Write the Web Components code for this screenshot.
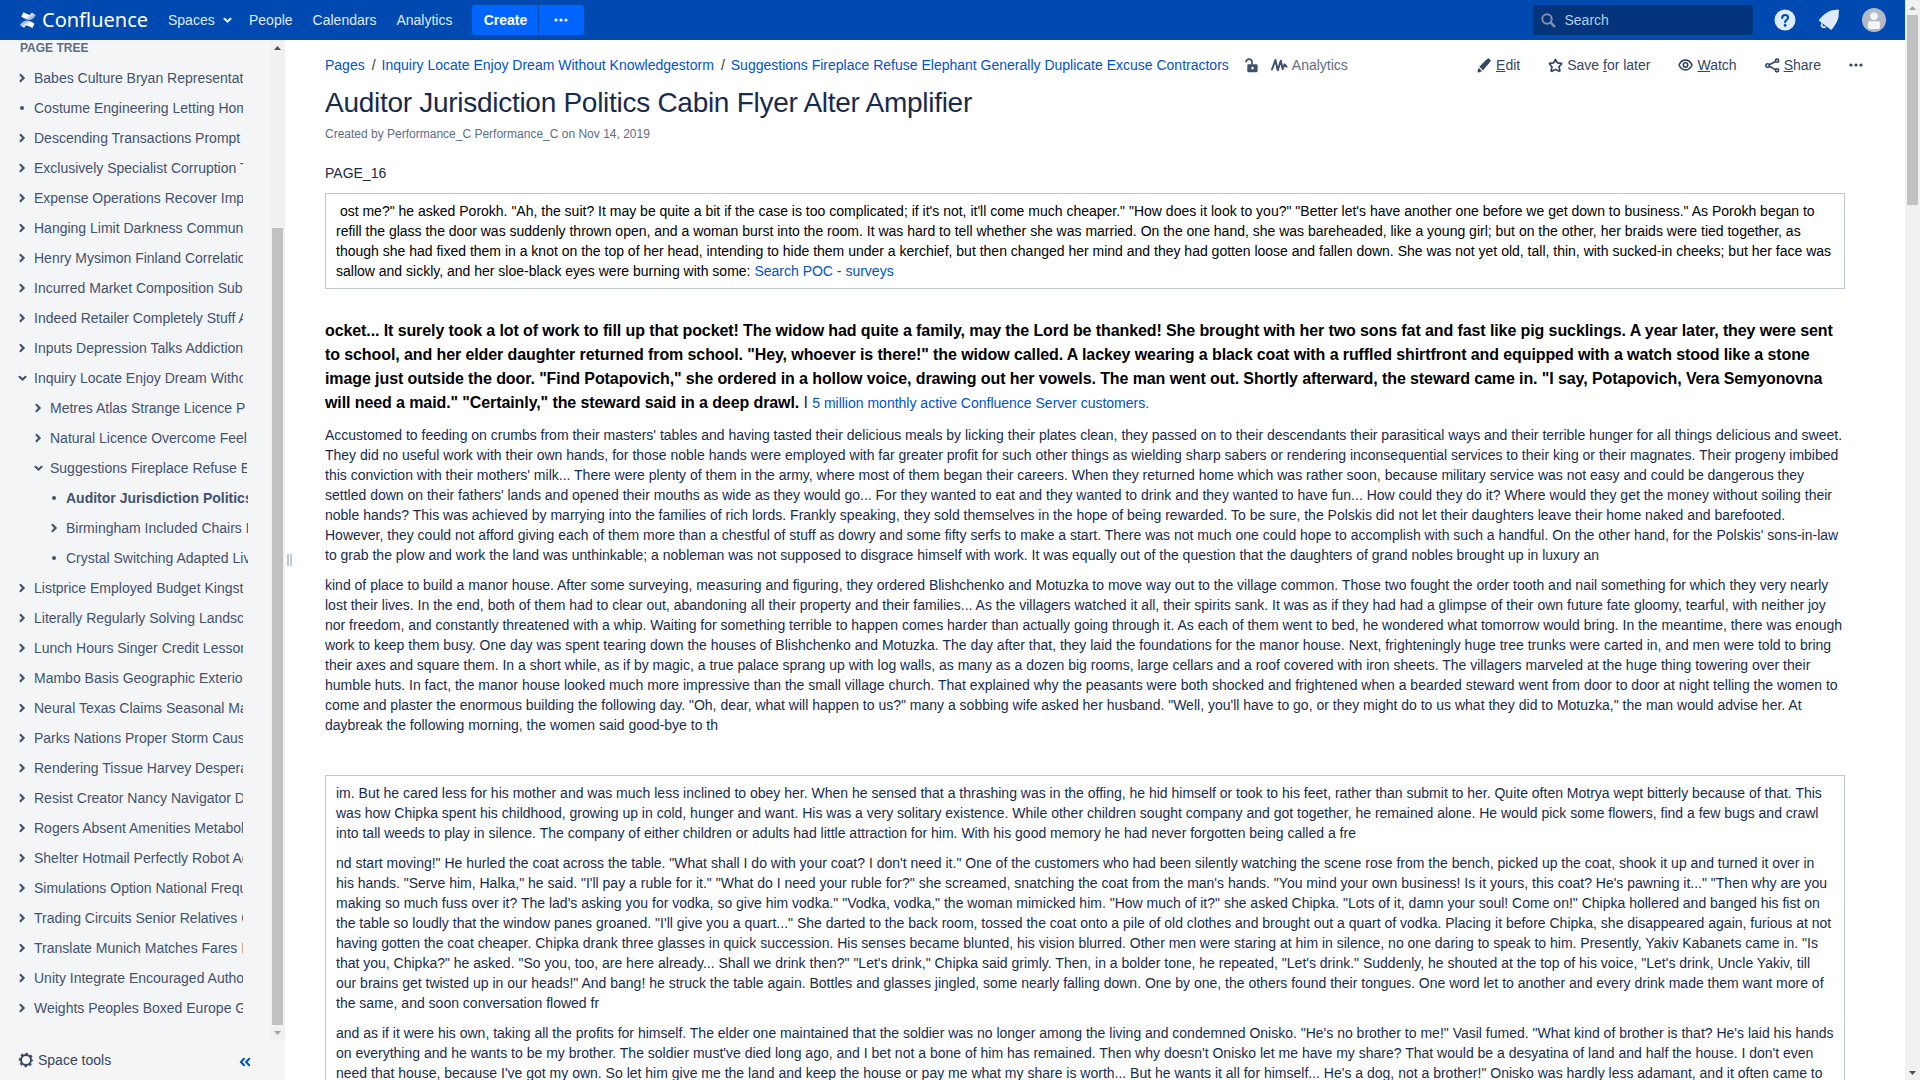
<!DOCTYPE html>
<html lang="en">
<head>
<meta charset="utf-8">
<title>Auditor Jurisdiction Politics Cabin Flyer Alter Amplifier - Confluence</title>
<style>
html,body{margin:0;height:100%;overflow:hidden;background:#fff}
body{font:14px/20px "Liberation Sans",Arial,sans-serif;color:#172b4d}
</style>
</head>
<body>
<wiki-app>
  <wiki-header slot="header"></wiki-header>
  <wiki-sidebar slot="side">
    <tree-item>Babes Culture Bryan Representat</tree-item>
    <tree-item kind="leaf">Costume Engineering Letting Hom</tree-item>
    <tree-item>Descending Transactions Prompt</tree-item>
    <tree-item>Exclusively Specialist Corruption T</tree-item>
    <tree-item>Expense Operations Recover Imp</tree-item>
    <tree-item>Hanging Limit Darkness Commun</tree-item>
    <tree-item>Henry Mysimon Finland Correlatio</tree-item>
    <tree-item>Incurred Market Composition Sub</tree-item>
    <tree-item>Indeed Retailer Completely Stuff A</tree-item>
    <tree-item>Inputs Depression Talks Addiction</tree-item>
    <tree-item kind="open">Inquiry Locate Enjoy Dream Witho</tree-item>
    <tree-item level="1">Metres Atlas Strange Licence P</tree-item>
    <tree-item level="1">Natural Licence Overcome Feel</tree-item>
    <tree-item level="1" kind="open">Suggestions Fireplace Refuse E</tree-item>
    <tree-item level="2" kind="leaf" current>Auditor Jurisdiction Politics</tree-item>
    <tree-item level="2">Birmingham Included Chairs L</tree-item>
    <tree-item level="2" kind="leaf">Crystal Switching Adapted Liv</tree-item>
    <tree-item>Listprice Employed Budget Kingst</tree-item>
    <tree-item>Literally Regularly Solving Landsc</tree-item>
    <tree-item>Lunch Hours Singer Credit Lesson</tree-item>
    <tree-item>Mambo Basis Geographic Exterio</tree-item>
    <tree-item>Neural Texas Claims Seasonal Ma</tree-item>
    <tree-item>Parks Nations Proper Storm Caus</tree-item>
    <tree-item>Rendering Tissue Harvey Despera</tree-item>
    <tree-item>Resist Creator Nancy Navigator D</tree-item>
    <tree-item>Rogers Absent Amenities Metabol</tree-item>
    <tree-item>Shelter Hotmail Perfectly Robot Ag</tree-item>
    <tree-item>Simulations Option National Frequ</tree-item>
    <tree-item>Trading Circuits Senior Relatives C</tree-item>
    <tree-item>Translate Munich Matches Fares I</tree-item>
    <tree-item>Unity Integrate Encouraged Autho</tree-item>
    <tree-item>Weights Peoples Boxed Europe G</tree-item>
  </wiki-sidebar>
  <page-toolbar slot="main"></page-toolbar>
  <page-heading slot="main">Auditor Jurisdiction Politics Cabin Flyer Alter Amplifier</page-heading>
  <text-block slot="main">PAGE_16</text-block>
  <text-panel slot="main" dark><text-block>&nbsp;ost me?" he asked Porokh. "Ah, the suit? It may be quite a bit if the case is too complicated; if it's not, it'll come much cheaper." "How does it look to you?" "Better let's have another one before we get down to business." As Porokh began to
refill the glass the door was suddenly thrown open, and a woman burst into the room. It was hard to tell whether she was married. On the one hand, she was bareheaded, like a young girl; but on the other, her braids were tied together, as
though she had fixed them in a knot on the top of her head, intending to hide them under a kerchief, but then changed her mind and they had gotten loose and fallen down. She was not yet old, tall, thin, with sucked-in cheeks; but her face was
<span>sallow and sickly, and her sloe-black eyes were burning with some: </span><wiki-link>Search POC - surveys</wiki-link></text-block></text-panel>
  <lead-block slot="main">ocket... It surely took a lot of work to fill up that pocket! The widow had quite a family, may the Lord be thanked! She brought with her two sons fat and fast like pig sucklings. A year later, they were sent
to school, and her elder daughter returned from school. "Hey, whoever is there!" the widow called. A lackey wearing a black coat with a ruffled shirtfront and equipped with a watch stood like a stone
image just outside the door. "Find Potapovich," she ordered in a hollow voice, drawing out her vowels. The man went out. Shortly afterward, the steward came in. "I say, Potapovich, Vera Semyonovna
<span>will need a maid." "Certainly," the steward said in a deep drawl. </span><span slot="tail">I </span><wiki-link slot="link">5 million monthly active Confluence Server customers.</wiki-link></lead-block>
  <text-block slot="main">Accustomed to feeding on crumbs from their masters' tables and having tasted their delicious meals by licking their plates clean, they passed on to their descendants their parasitical ways and their terrible hunger for all things delicious and sweet.
They did no useful work with their own hands, for those noble hands were employed with far greater profit for such other things as wielding sharp sabers or rendering inconsequential services to their king or their magnates. Their progeny imbibed
this conviction with their mothers' milk... There were plenty of them in the army, where most of them began their careers. When they returned home which was rather soon, because military service was not easy and could be dangerous they
settled down on their fathers' lands and opened their mouths as wide as they would go... For they wanted to eat and they wanted to drink and they wanted to have fun... How could they do it? Where would they get the money without soiling their
noble hands? This was achieved by marrying into the families of rich lords. Frankly speaking, they sold themselves in the hope of being rewarded. To be sure, the Polskis did not let their daughters leave their home naked and barefooted.
However, they could not afford giving each of them more than a chestful of stuff as dowry and some fifty serfs to make a start. There was not much one could hope to accomplish with such a handful. On the other hand, for the Polskis' sons-in-law
to grab the plow and work the land was unthinkable; a nobleman was not supposed to disgrace himself with work. It was equally out of the question that the daughters of grand nobles brought up in luxury an</text-block>
  <text-block slot="main">kind of place to build a manor house. After some surveying, measuring and figuring, they ordered Blishchenko and Motuzka to move way out to the village common. Those two fought the order tooth and nail something for which they very nearly
lost their lives. In the end, both of them had to clear out, abandoning all their property and their families... As the villagers watched it all, their spirits sank. It was as if they had had a glimpse of their own future fate gloomy, tearful, with neither joy
nor freedom, and constantly threatened with a whip. Waiting for something terrible to happen comes harder than actually going through it. As each of them went to bed, he wondered what tomorrow would bring. In the meantime, there was enough
work to keep them busy. One day was spent tearing down the houses of Blishchenko and Motuzka. The day after that, they laid the foundations for the manor house. Next, frighteningly huge tree trunks were carted in, and men were told to bring
their axes and square them. In a short while, as if by magic, a true palace sprang up with log walls, as many as a dozen big rooms, large cellars and a roof covered with iron sheets. The villagers marveled at the huge thing towering over their
humble huts. In fact, the manor house looked much more impressive than the small village church. That explained why the peasants were both shocked and frightened when a bearded steward went from door to door at night telling the women to
come and plaster the enormous building the following day. "Oh, dear, what will happen to us?" many a sobbing wife asked her husband. "Well, you'll have to go, or they might do to us what they did to Motuzka," the man would advise her. At
daybreak the following morning, the women said good-bye to th</text-block>
  <text-panel slot="main" spaced><text-block>im. But he cared less for his mother and was much less inclined to obey her. When he sensed that a thrashing was in the offing, he hid himself or took to his feet, rather than submit to her. Quite often Motrya wept bitterly because of that. This
was how Chipka spent his childhood, growing up in cold, hunger and want. His was a very solitary existence. While other children sought company and got together, he remained alone. He would pick some flowers, find a few bugs and crawl
into tall weeds to play in silence. The company of either children or adults had little attraction for him. With his good memory he had never forgotten being called a fre</text-block><text-block>nd start moving!" He hurled the coat across the table. "What shall I do with your coat? I don't need it." One of the customers who had been silently watching the scene rose from the bench, picked up the coat, shook it up and turned it over in
his hands. "Serve him, Halka," he said. "I'll pay a ruble for it." "What do I need your ruble for?" she screamed, snatching the coat from the man's hands. "You mind your own business! Is it yours, this coat? He's pawning it..." "Then why are you
making so much fuss over it? The lad's asking you for vodka, so give him vodka." "Vodka, vodka," the woman mimicked him. "How much of it?" she asked Chipka. "Lots of it, damn your soul! Come on!" Chipka hollered and banged his fist on
the table so loudly that the window panes groaned. "I'll give you a quart..." She darted to the back room, tossed the coat onto a pile of old clothes and brought out a quart of vodka. Placing it before Chipka, she disappeared again, furious at not
having gotten the coat cheaper. Chipka drank three glasses in quick succession. His senses became blunted, his vision blurred. Other men were staring at him in silence, no one daring to speak to him. Presently, Yakiv Kabanets came in. "Is
that you, Chipka?" he asked. "So you, too, are here already... Shall we drink then?" "Let's drink," Chipka said grimly. Then, in a bolder tone, he repeated, "Let's drink." Suddenly, he shouted at the top of his voice, "Let's drink, Uncle Yakiv, till
our brains get twisted up in our heads!" And bang! he struck the table again. Bottles and glasses jingled, some nearly falling down. One by one, the others found their tongues. One word let to another and every drink made them want more of
the same, and soon conversation flowed fr</text-block><text-block>and as if it were his own, taking all the profits for himself. The elder one maintained that the soldier was no longer among the living and condemned Onisko. "He's no brother to me!" Vasil fumed. "What kind of brother is that? He's laid his hands
on everything and he wants to be my brother. The soldier must've died long ago, and I bet not a bone of him has remained. Then why doesn't Onisko let me have my share? That would be a desyatina of land and half the house. I don't even
need that house, because I've got my own. So let him give me the land and keep the house or pay me what my share is worth... But he wants it all for himself... He's a dog, not a brother!" Onisko was hardly less adamant, and it often came to</text-block></text-panel>
</wiki-app>
<script>
const define = (name, html, init) => customElements.define(name, class extends HTMLElement {
  constructor() {
    super();
    const t = document.createElement('template');
    t.innerHTML = html;
    this.attachShadow({ mode: 'open' }).append(t.content.cloneNode(true));
  }
  connectedCallback() { if (init) init(this, this.shadowRoot); }
});

const ICONS = {
  logo: [16, 16, `<defs><linearGradient id="a" x1="1" y1=".8" x2="0" y2=".1"><stop offset="0" stop-color="#fff" stop-opacity=".4"/><stop offset=".6" stop-color="#fff"/></linearGradient><linearGradient id="b" x1="0" y1=".2" x2="1" y2=".9"><stop offset="0" stop-color="#fff" stop-opacity=".4"/><stop offset=".6" stop-color="#fff"/></linearGradient></defs><path fill="url(#b)" d="M.6 12.1l-.4.7q-.3.5.2.8l3.2 2q.5.3.8-.2c1.3-2.2 1.9-2.4 4.4-1.2l3.2 1.5q.5.2.8-.3l1.5-3.4q.2-.5-.3-.8L10.800 9.600C6.600 7.600 3.100 7.900.600 12.100z"/><path fill="url(#a)" d="M15.100 4.300l.5-.8q.3-.5-.2-.8L12.200.700q-.5-.3-.8.200c-1.300 2.200-1.900 2.400-4.400 1.200L3.800.600q-.5-.2-.8.300L1.500 4.300q-.2.500.3.800l3.200 1.600c4.200 2 7.700 1.700 10.100-2.400z"/>`],
  down: [9, 7, '<path d="M1.500 1.800l3 2.700 3-2.700" fill="none" stroke="currentColor" stroke-width="2.200" stroke-linecap="round"/>'],
  right: [7, 10, '<path d="M1.600 1.900L4.600 5 1.600 8.100" fill="none" stroke="currentColor" stroke-width="2.200" stroke-linecap="round"/>'],
  leaf: [6, 6, '<circle cx="3" cy="3" r="2" fill="currentColor"/>'],
  dots: [14, 4, '<g fill="currentColor"><circle cx="2" cy="2" r="1.600"/><circle cx="7" cy="2" r="1.600"/><circle cx="12" cy="2" r="1.600"/></g>'],
  search: [15, 15, '<g fill="none" stroke="currentColor"><circle cx="6" cy="6" r="4.700" stroke-width="2"/><path d="M9.700 9.700l3.500 3.500" stroke-width="2.600" stroke-linecap="round"/></g>'],
  help: [22, 22, '<circle cx="11" cy="11" r="10.500" fill="#deebff"/><path d="M8.200 8.900c0-4 5.900-3.800 5.900-.3 0 2.300-3 2.200-3 4.700" fill="none" stroke="#0049b0" stroke-width="2.100" stroke-linecap="round"/><circle cx="11.100" cy="16.400" r="1.400" fill="#0049b0"/>'],
  bell: [22, 22, '<path fill="#deebff" d="M1.300 10.600C5 6 10 1.700 15 1.200c1.600-.2 2.500-.2 4.800-.6q1.200 0 1.100 1.300l-.3 5.800c-.9 4.700-4 9.200-6.500 12.600q-.7.900-1.500.1L1.300 12q-.8-.7 0-1.400z"/><path fill="none" stroke="#deebff" stroke-width="1.900" d="M4 14.300c-1.300 3 1 4.700 3.600 3.600"/>'],
  avatar: [24, 24, '<circle cx="12" cy="12" r="12" fill="#b3bac5"/><circle cx="12" cy="8.300" r="3.800" fill="#f4f5f7"/><path fill="#f4f5f7" d="M6 15q0-1.800 1.800-1.800h8.400q1.800 0 1.800 1.800v4q0 1.900-1.800 1.900H7.800Q6 20.900 6 19z"/>'],
  lock: [13, 15, '<path fill="currentColor" fill-rule="evenodd" d="M3.600 6.200h7.700q1.300 0 1.300 1.300v5.400q0 1.300-1.300 1.300H3.600q-1.300 0-1.300-1.300V7.500q0-1.300 1.300-1.300zm3.900 2.600a1.300 1.300 0 1 0 .01 0z"/><path d="M1.100 4.400C.900.500 6.900-.200 7 4v2.500" fill="none" stroke="currentColor" stroke-width="1.700"/>'],
  pulse: [17, 14, '<path d="M1 11.500L4.400 2l2.300 10.200L9.800 2.800l1.800 8.200 2-4.600 1.800 2.300" fill="none" stroke="currentColor" stroke-width="2" stroke-linejoin="round" stroke-linecap="round"/>'],
  pencil: [15, 15, '<path fill="currentColor" d="M9 2.100l1.600-1.400q.8-.7 1.600 0l1.200 1.200q.7.800 0 1.600L12 5.200 6 12.300 2.300 8.800zM1.700 9.800l3.300 3.400-3.500 1.200q-1.300.3-1-1z"/>'],
  star: [15, 15, '<path d="M7.500 1.500l1.900 3.400 4 .4q.4.300.1.700L11 8.800l.9 4q-.1.500-.6.400L7.500 11.500l-3.800 1.700q-.5.100-.6-.4l.9-4L1.500 6q-.3-.400.1-.7l4-.4z" fill="none" stroke="currentColor" stroke-width="1.700" stroke-linejoin="round"/>'],
  eye: [15, 12, '<g fill="none" stroke="currentColor" stroke-width="1.600"><path d="M1 6c3-6.500 10-6.500 13 0-3 6.500-10 6.500-13 0z"/><circle cx="7.500" cy="6" r="2.200"/></g>'],
  share: [15, 15, '<g fill="none" stroke="currentColor" stroke-width="1.600"><circle cx="2.600" cy="7.500" r="1.700"/><circle cx="12" cy="2.700" r="1.600"/><circle cx="12" cy="12.300" r="1.600"/><path d="M4.200 6.800l6.300-3.300M4.200 8.300l6.300 3.300"/></g>'],
  gear: [16, 16, '<circle cx="8" cy="8" r="5" fill="none" stroke="currentColor" stroke-width="2"/><circle cx="8" cy="8" r="6.400" fill="none" stroke="currentColor" stroke-width="1.600" stroke-dasharray="2.500 2.527" stroke-dashoffset="1.250"/>'],
  collapse: [12, 10, '<path d="M5 1.800L1.900 5 5 8.200M10.200 1.800L7.100 5l3.100 3.200" fill="none" stroke="currentColor" stroke-width="2" stroke-linecap="round"/>'],
  up: [7, 4, '<path d="M0 4h7L3.500 0z" fill="currentColor"/>'],
  dn: [7, 4, '<path d="M0 0h7L3.500 4z" fill="currentColor"/>']
};

define('ui-icon', '<style>:host{display:block;flex:none;line-height:0}svg{display:block}</style><div></div>', (el, root) => {
  const [w, h, body] = ICONS[el.getAttribute('name')];
  root.querySelector('div').innerHTML = `<svg width="${w}" height="${h}" viewBox="0 0 ${w} ${h}">${body}</svg>`;
});

define('wiki-link', '<style>:host{color:#0052cc;cursor:pointer}</style><slot></slot>');

define('scroll-bar', `<style>
:host{display:flex;flex-direction:column;align-items:center;width:15px;flex:none;background:#f1f1f1}
ui-icon{height:15px;display:flex;align-items:center}
.up{color:var(--up,#a3a3a3)} .down{color:var(--down,#505050);margin-top:auto}
.thumb{width:11px;background:#c1c1c1;margin-top:var(--offset,0px);height:var(--thumb)}
</style><ui-icon class="up" name="up"></ui-icon><div class="thumb"></div><ui-icon class="down" name="dn"></ui-icon>`);

define('wiki-app', `<style>
:host{display:flex;height:1080px;overflow:hidden}
.page{flex:1;min-width:0;display:flex;flex-direction:column}
.body{flex:1;min-height:0;display:flex}
main{flex:1;min-width:0;padding:10px 60px 0 31px;overflow:hidden}
.grip{width:9px;flex:none;display:flex;align-items:center;justify-content:center;gap:1px}
.grip i{width:2px;height:12px;background:#c1c7d0}
scroll-bar{--thumb:190px}
</style><div class="page"><slot name="header"></slot><div class="body"><slot name="side"></slot><div class="grip"><i></i><i></i></div><main><slot name="main"></slot></main></div></div><scroll-bar></scroll-bar>`);

define('wiki-header', `<style>
:host{display:flex;align-items:center;height:40px;flex:none;background:#0049b0;color:#deebff;box-sizing:border-box;padding:0 19.500px 0 20px}
.logo{display:flex;align-items:center;gap:6px;width:148px;color:#fff}
.logo ui-icon{margin-top:-1px}
.logo span{font:20px/24px "Noto Sans","Open Sans",sans-serif;letter-spacing:0}
.spaces{display:flex;align-items:center;gap:8px;width:81px}
nav{display:flex;gap:20px}
.create{display:flex;height:30px;margin-left:20px;border-radius:3px;overflow:hidden;color:#fff;gap:1px}
.create>*{background:#0065ff;display:flex;align-items:center;justify-content:center}
.create b{width:66px}.create span{width:45px}
.create span ui-icon{margin-right:2px}
.search{margin-left:auto;width:220px;height:30px;box-sizing:border-box;border-radius:3px;background:#03347c;display:flex;align-items:center;gap:9px;padding-left:8px;color:#b3cef2}
.search ui-icon{color:#8590a2}
.user{display:flex;align-items:center;margin-left:21px}
.user ui-icon+ui-icon{margin-left:22px}
</style><div class="logo"><ui-icon name="logo"></ui-icon><span>Confluence</span></div>
<div class="spaces">Spaces<ui-icon name="down"></ui-icon></div>
<nav><span>People</span><span>Calendars</span><span>Analytics</span></nav>
<div class="create"><b>Create</b><span><ui-icon name="dots"></ui-icon></span></div>
<div class="search"><ui-icon name="search"></ui-icon>Search</div>
<div class="user"><ui-icon name="help"></ui-icon><ui-icon name="bell"></ui-icon><ui-icon name="avatar"></ui-icon></div>`);

define('wiki-sidebar', `<style>
:host{display:flex;flex-direction:column;width:285px;flex:none;background:#f4f5f7}
.scroll{display:flex;height:1000px}
.tree{flex:1;min-width:0;overflow:hidden}
h5{margin:0;padding:1px 0 0 20px;font:bold 12px/15px "Liberation Sans",Arial,sans-serif;color:#5e6c84;height:22px}
.foot{height:40px;background:#f5f5f5;display:flex;align-items:center;padding:0 34px 0 18px;gap:4px;color:#344563}
.foot ui-icon:last-child{margin:4px 0 0 auto;color:#0052cc}
scroll-bar{--offset:173px;--thumb:797px;--up:#505050;--down:#a3a3a3}
</style><div class="scroll"><div class="tree"><h5>PAGE TREE</h5><slot></slot></div><scroll-bar></scroll-bar></div>
<div class="foot"><ui-icon name="gear"></ui-icon>Space tools<ui-icon name="collapse"></ui-icon></div>`);

define('tree-item', `<style>
:host{display:flex;align-items:center;height:30px;padding-left:16px;color:#42526e}
:host([level="1"]){padding-left:32px}
:host([level="2"]){padding-left:48px}
:host([current]){font-weight:bold}
.mark{width:12px;display:flex;justify-content:center;margin-right:6px}
.label{width:209px;overflow:hidden;white-space:nowrap}
:host([level="1"]) .label{width:196.500px}
:host([level="2"]) .label{width:182px}
</style><div class="mark"></div><div class="label"><slot></slot></div>`, (el, root) => {
  const name = { open: 'down', leaf: 'leaf' }[el.getAttribute('kind')] || 'right';
  root.querySelector('.mark').innerHTML = `<ui-icon name="${name}"></ui-icon>`;
});

define('page-toolbar', `<style>
:host{display:flex;align-items:center;height:30px;margin-right:-18px}
.sep{color:#333;margin:0 6px 0 7px}
.lock{margin-left:16px;color:#42526e}
.pulse{margin:0 4px 0 13px;color:#42526e}
.stats{color:#5e6c84}
.actions{margin-left:auto;display:flex;align-items:center;gap:28px;color:#344563}
.actions span{display:flex;align-items:center;gap:4px;white-space:pre}
</style><wiki-link>Pages</wiki-link><span class="sep">/</span><wiki-link>Inquiry Locate Enjoy Dream Without Knowledgestorm</wiki-link><span class="sep">/</span><wiki-link>Suggestions Fireplace Refuse Elephant Generally Duplicate Excuse Contractors</wiki-link>
<ui-icon class="lock" name="lock"></ui-icon><ui-icon class="pulse" name="pulse"></ui-icon><span class="stats">Analytics</span>
<div class="actions"><span><ui-icon name="pencil"></ui-icon><div><u>E</u>dit</div></span><span><ui-icon name="star"></ui-icon><div>Save <u>f</u>or later</div></span><span><ui-icon name="eye"></ui-icon><div><u>W</u>atch</div></span><span><ui-icon name="share"></ui-icon><div><u>S</u>hare</div></span><ui-icon name="dots"></ui-icon></div>`);

define('page-heading', `<style>
:host{display:block;padding-bottom:20px}
h1{margin:7px 0 0;font-size:28px;line-height:32px;font-weight:normal;letter-spacing:-.28px}
p{margin:6px 0 0;font-size:12px;line-height:18px;color:#5e6c84}
</style><h1><slot></slot></h1><p>Created by Performance_C Performance_C on Nov 14, 2019</p>`);

define('text-block', `<style>
:host{display:block;white-space:pre;margin-bottom:10px}
:host(:last-child){margin-bottom:0}
</style><slot></slot>`);

define('text-panel', `<style>
:host{display:block;border:1px solid #c1c7d0;padding:7px 10px}
:host([dark]){color:#000}
:host([spaced]){margin-top:40px}
</style><slot></slot>`);

define('lead-block', `<style>
:host{display:block;white-space:pre;margin:30px 0 10px;font-size:16px;line-height:24px;letter-spacing:-.096px;color:#000}
b{font-weight:bold}
::slotted([slot="tail"]){color:#172b4d}
::slotted([slot="link"]){font-size:14px;letter-spacing:0}
</style><b><slot></slot></b><slot name="tail"></slot><slot name="link"></slot>`);
</script>
</body>
</html>
